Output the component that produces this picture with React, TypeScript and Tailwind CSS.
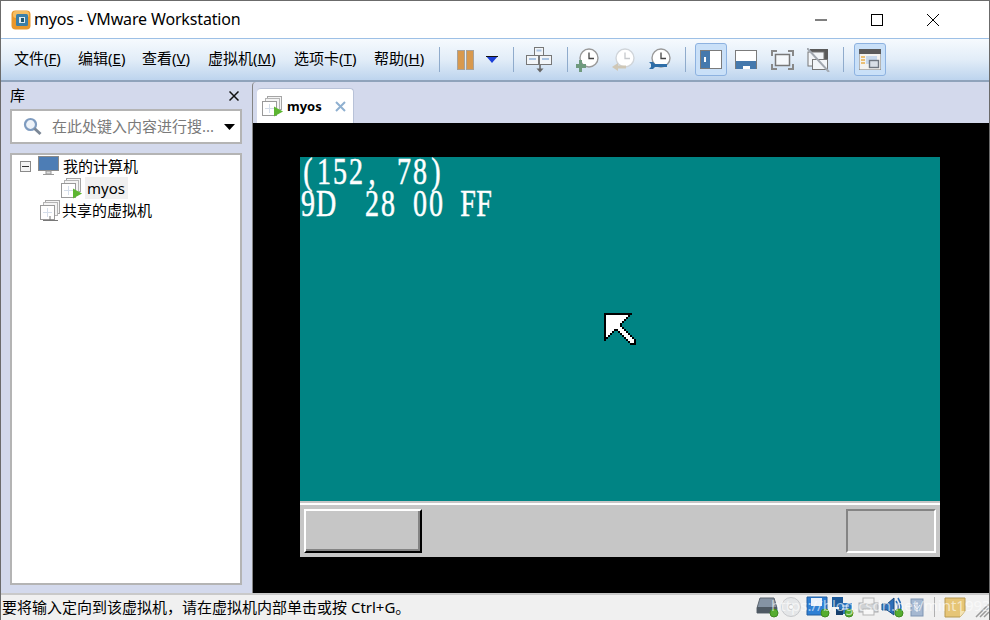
import React from 'react'

const CURSOR = [
  '**************..',
  '*OOOOOOOOOOO*...',
  '*OOOOOOOOOO*....',
  '*OOOOOOOOO*.....',
  '*OOOOOOOO*......',
  '*OOOOOOO*.......',
  '*OOOOOOO*.......',
  '*OOOOOOOO*......',
  '*OOOO**OOO*.....',
  '*OOO*..*OOO*....',
  '*OO*....*OOO*...',
  '*O*......*OOO*..',
  '**........*OOO*.',
  '*..........*OOO*',
  '............*OO*',
  '.............***',
]

const MENUS = [
  { label: '文件', key: 'F', width: 'w-[64px]' },
  { label: '编辑', key: 'E', width: 'w-[64px]' },
  { label: '查看', key: 'V', width: 'w-[66px]' },
  { label: '虚拟机', key: 'M', width: 'w-[86px]' },
  { label: '选项卡', key: 'T', width: 'w-[80px]' },
  { label: '帮助', key: 'H', width: 'w-[65px]' },
]

const Sep = ({ ml }: { ml: string }) => <div className={`w-px h-[25px] bg-[#8fabcc] ${ml}`} />

// guest OS text sits in a fixed 16px cell per character
function GuestLine({ text }: { text: string }) {
  return (
    <div className="flex h-[32px] origin-top scale-y-[1.37]">
      {text.split('').map((c, i) => (
        <span key={i} className="w-[16px] shrink-0 text-center">
          {c}
        </span>
      ))}
    </div>
  )
}

function MouseCursor() {
  return (
    <svg width="32" height="32" viewBox="0 0 16 16" shapeRendering="crispEdges" className="absolute left-[351px] top-[190px]">
      {CURSOR.flatMap((row, y) =>
        row.split('').map((c, x) =>
          c === '.' ? null : <rect key={`${x}-${y}`} x={x} y={y} width="1" height="1" fill={c === '*' ? '#000' : '#fff'} />,
        ),
      )}
    </svg>
  )
}

function VmIcon({ play = true, shared = false }: { play?: boolean; shared?: boolean }) {
  return (
    <svg width="21" height="21" viewBox="0 0 21 21" className="shrink-0">
      <rect x="5.5" y="0.5" width="14" height="13" fill="#f4f4f4" stroke="#a5a5a5" />
      <rect x="3.5" y="2.5" width="14" height="13" fill="#f4f4f4" stroke="#b5b5b5" />
      <rect x="0.5" y="5.5" width="14" height="14" fill="#fff" stroke="#9a9a9a" />
      <path d="M7.5 8v9M3 12.5h9" stroke="#d5deea" strokeWidth="1" />
      {play && <path d="M12 10.5l9 5-9 5z" fill="#5cb531" />}
      {shared && <path d="M10 16v4M3 20.5h15" stroke="#777" strokeWidth="1" />}
    </svg>
  )
}

function Clock({ faded = false }: { faded?: boolean }) {
  return (
    <>
      <circle cx="13" cy="10" r="9" fill="#fff" stroke={faded ? '#d0d5da' : '#9a9a9a'} strokeWidth="1.4" />
      <path d="M13 4.5V10.5H18" fill="none" stroke={faded ? '#c6c9cd' : '#444'} strokeWidth="1.3" />
    </>
  )
}

function App() {
  return (
    <div className="relative w-[990px] h-[620px] overflow-hidden flex flex-col bg-white text-black border-x border-t border-[#6b6b6b] font-['Noto_Sans','Noto_Sans_CJK_SC',sans-serif]">
      {/* title bar */}
      <div className="h-[37px] shrink-0 flex items-center bg-white pl-[10px]">
        <svg width="20" height="20" viewBox="0 0 20 20">
          <rect x="0.5" y="0.5" width="19" height="19" rx="4" fill="#e9972c" />
          <rect x="2" y="1" width="16" height="7" rx="3" fill="#f5bd63" />
          <rect x="5" y="4" width="12" height="12" rx="1.5" fill="#3c7fa8" />
          <rect x="8" y="7" width="6" height="6" fill="#dfeaf0" />
          <rect x="10" y="8" width="3" height="4" fill="#22566f" />
        </svg>
        <span className="ml-[3px] mb-[2px] text-[16px] tracking-[-0.15px] leading-none">myos - VMware Workstation</span>
        <div className="ml-auto flex items-center">
          <svg width="12" height="2" viewBox="0 0 12 2"><path d="M0 1h12" stroke="#000" strokeWidth="1" /></svg>
          <svg width="12" height="12" viewBox="0 0 12 12" className="ml-[44px]"><rect x="0.5" y="0.5" width="11" height="11" fill="none" stroke="#000" /></svg>
          <svg width="12" height="12" viewBox="0 0 12 12" className="ml-[44px] mr-[50px]"><path d="M0 0l12 12M12 0L0 12" stroke="#000" strokeWidth="1" /></svg>
        </div>
      </div>

      {/* toolbar */}
      <div className="h-[44px] shrink-0 flex items-center pl-[13px] border-t border-b-2 border-t-[#9dc0e6] border-b-[#8fa3bb] bg-gradient-to-b from-[#f6fafe] via-[#e2edf8] to-[#bdd4ee]">
        {MENUS.map((m) => (
          <div key={m.key} className={`${m.width} shrink-0 pb-[2px] text-[15px] leading-none whitespace-nowrap`}>
            {m.label}(<span className="underline">{m.key}</span>)
          </div>
        ))}
        <Sep ml="" />
        <svg width="20" height="20" viewBox="0 0 20 20" className="ml-[16px]">
          <rect x="1.5" y="0.5" width="7" height="19" fill="#d8994e" stroke="#a8a29a" />
          <rect x="10.5" y="0.5" width="7" height="19" fill="#d8994e" stroke="#a8a29a" />
        </svg>
        <svg width="12" height="7" viewBox="0 0 12 7" className="ml-[10px]">
          <path d="M0 0h12L6 7z" fill="#1b3fd8" />
          <path d="M0 .5h12" stroke="#111" />
        </svg>
        <Sep ml="ml-[15px]" />
        <svg width="26" height="26" viewBox="0 0 26 26" className="ml-[12px]">
          <rect x="8.5" y="0.5" width="9" height="8" fill="#f2f5f8" stroke="#777" />
          <rect x="0.5" y="8.5" width="12" height="9" fill="#f2f5f8" stroke="#777" />
          <rect x="13.5" y="8.5" width="12" height="9" fill="#f2f5f8" stroke="#777" />
          <path d="M3 12h7M16 12h7M10.5 3.5h5" stroke="#a9c3e2" strokeWidth="2" />
          <path d="M14 18v5" stroke="#666" strokeWidth="1.6" />
          <path d="M10.5 21.5h7L14 25.5z" fill="#666" />
        </svg>
        <Sep ml="ml-[15px]" />
        <svg width="23" height="24" viewBox="0 0 23 24" className="ml-[8px]">
          <Clock />
          <path d="M6 12v4h4v4H6v4H3v-4H0v-4h3v-4z" fill="#6f9a7e" />
        </svg>
        <svg width="23" height="24" viewBox="0 0 23 24" className="ml-[13px]">
          <Clock faded />
          <path d="M0 19l6-4v2.500h8v3H6V23z" fill="#cfc7b6" />
        </svg>
        <svg width="23" height="24" viewBox="0 0 23 24" className="ml-[13px]">
          <Clock />
          <path d="M1 14h4l2 2h12v3H7l-2 2H1l2-2v-3z" fill="#2f6ea8" />
        </svg>
        <Sep ml="ml-[14px]" />
        <div className="ml-[9px] w-[32px] h-[33px] shrink-0 flex items-center justify-center rounded-[3px] border border-[#8db2e0] bg-[#c9e0f8]">
          <div className="w-[22px] h-[19px] flex border border-[#7b7b7b] bg-white">
            <div className="w-[9px] bg-[#4579ad] flex items-center">
              <div className="w-[2px] h-[5px] ml-[3px] bg-white" />
            </div>
          </div>
        </div>
        <div className="ml-[8px] w-[22px] h-[19px] shrink-0 flex flex-col border border-[#7b7b7b] border-b-0 bg-white">
          <div className="flex-1" />
          <div className="h-[8px] bg-[#4579ad] flex justify-center items-end">
            <div className="w-[7px] h-[3px] bg-white" />
          </div>
        </div>
        <svg width="23" height="20" viewBox="0 0 23 20" className="ml-[14px]">
          <rect x="4.500" y="4.500" width="14" height="11" fill="#f5f8fb" stroke="#777" strokeWidth="1.500" />
          <path d="M1 6V1h5M17 1h5v5M1 14v5h5M17 19h5v-5" fill="none" stroke="#888" strokeWidth="2" />
        </svg>
        <svg width="23" height="24" viewBox="0 0 23 24" className="ml-[13px]">
          <rect x="3" y="1" width="18" height="14" fill="#5b5b5b" />
          <rect x="1" y="4" width="16" height="14" fill="#f2f5f8" stroke="#777" />
          <rect x="5.500" y="11.500" width="15" height="10" fill="#f2f5f8" stroke="#777" />
          <path d="M0 0l22 24" stroke="#a2a8b0" strokeWidth="2" />
        </svg>
        <Sep ml="ml-[13px]" />
        <div className="ml-[10px] w-[32px] h-[33px] shrink-0 flex items-center justify-center rounded-[3px] border border-[#8db2e0] bg-[#c9e0f8]">
          <svg width="22" height="21" viewBox="0 0 22 21">
            <rect x="0" y="0" width="22" height="21" fill="#f3f3f0" stroke="#777" />
            <rect x="0" y="0" width="22" height="5" fill="#5a5a5a" />
            <rect x="7" y="7" width="11" height="8" fill="#c6d8ec" />
            <path d="M2 8h4M2 11h4M2 14h4" stroke="#e8b04c" strokeWidth="1.400" />
            <rect x="10.500" y="11.500" width="9" height="7" fill="#d8dfe6" stroke="#6f7780" strokeWidth="1.400" />
          </svg>
        </div>
      </div>

      {/* body */}
      <div className="flex-1 min-h-0 flex bg-[#d3d9ec]">
        <div className="w-[251px] shrink-0 flex flex-col pl-[9px] pr-[10px] pb-[8px]">
          <div className="h-[27px] shrink-0 flex items-center justify-between pr-[2px]">
            <span className="text-[15px] leading-none">库</span>
            <svg width="10" height="10" viewBox="0 0 10 10" className="mr-[1px]"><path d="M.5.500l9 9M9.500.500l-9 9" stroke="#111" strokeWidth="1.500" /></svg>
          </div>
          <div className="h-[35px] shrink-0 flex items-center bg-white border-2 border-[#b4b4b4] pl-[11px] pr-[5px]">
            <svg width="19" height="19" viewBox="0 0 19 19" className="shrink-0">
              <circle cx="7.500" cy="7.500" r="5.500" fill="#eef3f9" stroke="#7f9cc0" strokeWidth="2.200" />
              <path d="M11.500 11.500l6 5.500" stroke="#7b8796" strokeWidth="3" />
            </svg>
            <span className="ml-[10px] text-[15px] leading-none text-[#7a7a7a] whitespace-nowrap">在此处键入内容进行搜...</span>
            <svg width="11" height="6" viewBox="0 0 11 6" className="ml-auto shrink-0"><path d="M0 0h11L5.500 6z" fill="#000" /></svg>
          </div>
          <div className="mt-[9px] flex-1 bg-white border-2 border-[#b4b4b4] text-[15px]">
            <div className="h-[22px] flex items-center pl-[8px]">
              <div className="w-[11px] h-[11px] border border-[#8a8a8a] flex items-center justify-center bg-[#f5f5f5]">
                <div className="w-[7px] h-px bg-[#333]" />
              </div>
              <svg width="21" height="20" viewBox="0 0 21 20" className="ml-[7px]">
                <rect x="0.500" y="0.500" width="20" height="14" fill="#4d7db5" stroke="#8a8a8a" />
                <path d="M8 15h5v3H8zM5 18.500h11" fill="#ddd" stroke="#999" />
              </svg>
              <span className="ml-[4px] leading-none">我的计算机</span>
            </div>
            <div className="h-[22px] flex items-center pl-[49px]">
              <VmIcon />
              <div className="ml-[3px] h-[22px] px-[2px] w-[43px] flex items-center bg-[#f0f0f0] text-[15px] leading-none">myos</div>
            </div>
            <div className="h-[22px] flex items-center pl-[28px]">
              <VmIcon play={false} shared />
              <span className="ml-[1px] leading-none">共享的虚拟机</span>
            </div>
          </div>
        </div>

        <div className="flex-1 min-w-0 flex flex-col border-l border-[#858585] rounded-tl-[4px]">
          <div className="h-[41px] shrink-0 flex items-end pl-[4px]">
            <div className="w-[97px] h-[35px] flex items-center pl-[5px] bg-white rounded-t-[4px] border-r border-t border-[#b8c2d8]">
              <VmIcon />
              <span className="ml-[4px] text-[13px] font-bold leading-none">myos</span>
              <svg width="11" height="11" viewBox="0 0 11 11" className="ml-[13px]"><path d="M1 1l9 9M10 1l-9 9" stroke="#8fb0d0" strokeWidth="2" /></svg>
            </div>
          </div>
          {/* guest screen */}
          <div className="relative flex-1 min-h-0 bg-black pl-[47px] pt-[34px]">
            <div className="w-[640px] h-[400px] flex flex-col">
              <div className="h-[344px] bg-[#008484] overflow-hidden font-['Liberation_Serif',serif] text-white text-[28px] leading-none whitespace-pre [-webkit-text-stroke:0.4px_white]">
                <div className="mt-[-5px]">
                  <GuestLine text="(152, 78)" />
                  <GuestLine text="9D  28 00 FF" />
                </div>
              </div>
              <div className="h-[2px] bg-[#c6c6c6]" />
              <div className="h-[2px] bg-white" />
              <div className="flex-1 bg-[#c6c6c6] flex justify-between px-[4px] pt-[4px]">
                <div className="w-[118px] h-[44px] border-2 border-t-white border-l-white border-r-black border-b-black bg-[#c6c6c6]">
                  <div className="h-full border-r-2 border-b-2 border-[#848484]" />
                </div>
                <div className="w-[90px] h-[44px] border-2 border-t-[#848484] border-l-[#848484] border-r-white border-b-white" />
              </div>
            </div>
            <MouseCursor />
          </div>
        </div>
      </div>

      {/* status bar */}
      <div className="relative h-[27px] shrink-0 flex items-center border-t-2 border-[#c9c9c9] bg-[#f0f0f0] pl-px pr-0 text-[15px]">
        <span className="leading-none whitespace-nowrap">要将输入定向到该虚拟机，请在虚拟机内部单击或按 Ctrl+G。</span>
        <svg width="234" height="24" viewBox="0 0 234 24" className="absolute left-[755px] top-0">
          {/* hard disk */}
          <path d="M4 3h14l3 10v5H1v-5z" fill="#8593a3" stroke="#5d6670" />
          <rect x="1" y="12" width="20" height="6" fill="#4f5963" />
          {/* cd */}
          <circle cx="35" cy="12" r="9.500" fill="#e4e6e8" stroke="#c7c9cc" />
          <circle cx="35" cy="12" r="2.500" fill="#fafafa" stroke="#c7c9cc" />
          {/* floppy */}
          <path d="M51 2h20v18H51z" fill="#2f7fd4" stroke="#235fa0" />
          <rect x="55" y="3" width="11" height="8" fill="#eaf2fb" />
          {/* network */}
          <rect x="76" y="2" width="11" height="10" fill="#1f5c9c" />
          <rect x="83" y="8" width="13" height="11" fill="#2c74bd" />
          <rect x="80" y="14" width="7" height="6" fill="#163f6c" />
          <path d="M86 11h7M86 14h7" stroke="#e6eef7" />
          {/* printer */}
          <rect x="103" y="8" width="19" height="9" fill="#cfd2d5" stroke="#a7a9ab" />
          <rect x="107" y="3" width="11" height="6" fill="#f2f2f2" stroke="#b5b5b5" />
          <rect x="107" y="14" width="11" height="6" fill="#f7f7f7" stroke="#b5b5b5" />
          {/* sound */}
          <path d="M126 9h5l7-6v17l-7-5h-5z" fill="#2e6fb8" stroke="#1a4a80" />
          <path d="M140 6q4 6 0 12M142 3q6 9 0 18" fill="none" stroke="#2e6fb8" strokeWidth="1.600" />
          {/* usb */}
          <rect x="155" y="4" width="12" height="17" fill="#a5b8d1" stroke="#7f95b3" />
          <path d="M161 7v10M158 10l3 4 3-4" fill="none" stroke="#eef3f9" />
          {/* status dots */}
          <circle cx="18" cy="18" r="4" fill="#56ad30" stroke="#3f8a20" />
          <circle cx="69" cy="18" r="4" fill="#56ad30" stroke="#3f8a20" />
          <circle cx="93" cy="18" r="4" fill="#56ad30" stroke="#3f8a20" />
          <circle cx="143" cy="18" r="4" fill="#56ad30" stroke="#3f8a20" />
          <path d="M178.500 2v20" stroke="#b0b0b0" />
          {/* note */}
          <path d="M189 3h20v13l-5 6h-15z" fill="#e6c576" stroke="#b79a52" />
          <path d="M204 22v-6h5z" fill="#f4e4b4" />
          {/* grip */}
          <path d="M220 22l13-13M224 22l9-9M228 22l5-5" stroke="#9a9a9a" strokeWidth="1.500" />
        </svg>
        <span className="absolute left-[770px] top-[3px] text-[15px] leading-none text-white/60 whitespace-nowrap">https://blog.csdn.net/mint1993</span>
      </div>
    </div>
  )
}

export default App
